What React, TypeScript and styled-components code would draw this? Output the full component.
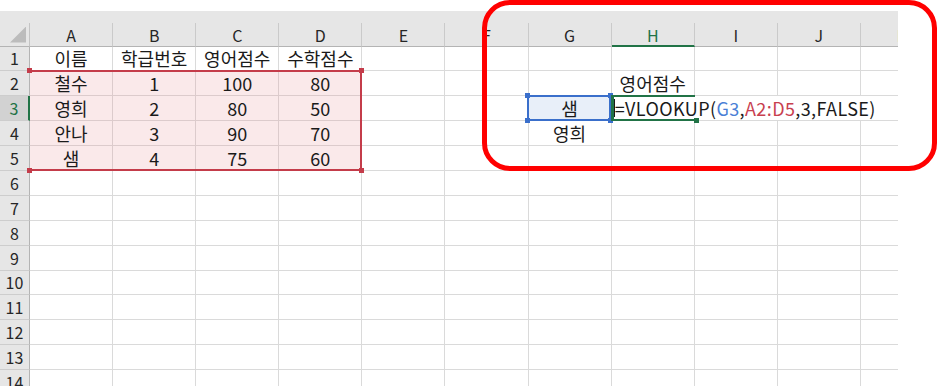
import styled, { createGlobalStyle } from "styled-components";

const ROW_HEAD_W = 30;
const COL_W = 83.1;
const ROW_H = 24.9;
const STRIP_H = 12;
const HEAD_H = 23.5;
const GRID_TOP = STRIP_H + HEAD_H;

const GREEN = "#217346";
const RANGE_RED = "#c43c4a";
const SEL_BLUE = "#3a6fcb";
const FONT = `"Noto Sans CJK KR", "Noto Sans", sans-serif`;

const COLS = ["A", "B", "C", "D", "E", "F", "G", "H", "I", "J", "K"];
const ROWS = Array.from({ length: 14 }, (_, i) => i + 1);

const DATA: Record<string, string> = {
    A1: "이름", B1: "학급번호", C1: "영어점수", D1: "수학점수",
    A2: "철수", B2: "1", C2: "100", D2: "80",
    A3: "영희", B3: "2", C3: "80", D3: "50",
    A4: "안나", B4: "3", C4: "90", D4: "70",
    A5: "샘", B5: "4", C5: "75", D5: "60",
    H2: "영어점수",
    G3: "샘",
    G4: "영희",
};

const colLeft = (c: number) => ROW_HEAD_W + c * COL_W;
const rowTop = (r: number) => GRID_TOP + (r - 1) * ROW_H;

type Tint = "pink" | "blue" | undefined;

const tintFor = (col: number, row: number): Tint => {
    if (col <= 3 && row >= 2 && row <= 5) return "pink";
    if (col === 6 && row === 3) return "blue";
    return undefined;
};

const GlobalStyle = createGlobalStyle`
    body {
        margin: 0;
        background: #ffffff;
        font-family: ${FONT};
    }
`;

const Page = styled.div`
    position: relative;
    width: 938px;
    height: 386px;
    padding-top: 11px;
    box-sizing: border-box;
    overflow: hidden;
`;

const Sheet = styled.div`
    position: relative;
    width: 898px;
    height: 375px;
    overflow: hidden;
    background: #ffffff;
`;

const TopStrip = styled.div`
    height: ${STRIP_H}px;
    background: #e6e6e6;
`;

const HeaderRow = styled.div`
    display: flex;
    height: ${HEAD_H}px;
    background: #e6e6e6;
`;

const Corner = styled.div`
    position: relative;
    flex: 0 0 ${ROW_HEAD_W}px;
    box-sizing: border-box;
    border-right: 1px solid #c4c4c4;
    border-bottom: 1px solid #b4b4b4;

    &::after {
        content: "";
        position: absolute;
        right: 3px;
        bottom: 3px;
        width: 16px;
        height: 16px;
        background: #bcbcbc;
        clip-path: polygon(100% 0, 100% 100%, 0 100%);
    }
`;

const ColHead = styled.div<{ $active?: boolean }>`
    flex: 0 0 ${COL_W}px;
    box-sizing: border-box;
    display: flex;
    align-items: center;
    justify-content: center;
    padding-top: 2px;
    font-size: 16px;
    color: ${(p) => (p.$active ? GREEN : "#262626")};
    border-right: 1px solid #cacaca;
    border-bottom: ${(p) => (p.$active ? `2px solid ${GREEN}` : "1px solid #b4b4b4")};
`;

const Row = styled.div`
    display: flex;
    height: ${ROW_H}px;
`;

const RowHead = styled.div<{ $active?: boolean }>`
    flex: 0 0 ${ROW_HEAD_W}px;
    box-sizing: border-box;
    display: flex;
    align-items: center;
    justify-content: center;
    font-size: 16px;
    color: ${(p) => (p.$active ? GREEN : "#262626")};
    background: ${(p) => (p.$active ? "#d2d2d2" : "#e6e6e6")};
    border-bottom: 1px solid #cdcdcd;
    border-right: ${(p) => (p.$active ? `2px solid ${GREEN}` : "1px solid #b4b4b4")};
`;

const Cell = styled.div<{ $tint?: Tint }>`
    flex: 0 0 ${COL_W}px;
    box-sizing: border-box;
    display: flex;
    align-items: center;
    justify-content: center;
    font-size: 18px;
    color: #1a1a1a;
    white-space: nowrap;
    background: ${(p) =>
        p.$tint === "pink" ? "#fae9ea" : p.$tint === "blue" ? "#e8eff9" : "#ffffff"};
    border-right: 1px solid ${(p) => (p.$tint === "pink" ? "#dccbcc" : "#dadada")};
    border-bottom: 1px solid ${(p) => (p.$tint === "pink" ? "#dccbcc" : "#dadada")};
`;

const Frame = styled.div<{ $color: string; $open?: boolean }>`
    position: absolute;
    box-sizing: border-box;
    border: 2px solid ${(p) => p.$color};
    ${(p) => (p.$open ? "border-left-color: transparent;" : "")}
    pointer-events: none;
`;

const Handle = styled.span<{ $color: string; $v: "top" | "bottom"; $h: "left" | "right"; $size?: number }>`
    position: absolute;
    width: ${(p) => p.$size ?? 5}px;
    height: ${(p) => p.$size ?? 5}px;
    background: ${(p) => p.$color};
    ${(p) => p.$v}: -${(p) => Math.ceil(((p.$size ?? 5) + 2) / 2)}px;
    ${(p) => p.$h}: -${(p) => Math.ceil(((p.$size ?? 5) + 2) / 2)}px;
`;

const EditOverflow = styled.div`
    position: absolute;
    box-sizing: border-box;
    background: #ffffff;
    display: flex;
    align-items: center;
    padding-left: 3px;
    font-size: 18px;
    letter-spacing: 0.4px;
    color: #1a1a1a;
    white-space: nowrap;
`;

const EditBox = styled.div`
    position: absolute;
    box-sizing: border-box;
    border-top: 2px solid ${GREEN};
    border-bottom: 2px solid ${GREEN};
    border-left: 3px solid ${GREEN};
`;

const Caret = styled.span`
    display: inline-block;
    width: 1px;
    height: 18px;
    background: #1a1a1a;
`;

const Ref = styled.span<{ $color: string }>`
    color: ${(p) => p.$color};
`;

const Annotation = styled.div`
    position: absolute;
    left: 482px;
    top: 0px;
    width: 455px;
    height: 171px;
    box-sizing: border-box;
    border: 5px solid #ff0000;
    border-radius: 28px;
    pointer-events: none;
`;

function App() {
    const rangeLeft = colLeft(0) - 1;
    const rangeTop = rowTop(2) - 1;
    const rangeW = colLeft(4) - rangeLeft;
    const rangeH = rowTop(6) - rangeTop;

    const gLeft = colLeft(6) - 2;
    const rTop = rowTop(3) - 1.5;
    const hLeft = colLeft(7) - 1;

    return (
        <>
            <GlobalStyle />
            <Page>
                <Sheet>
                    <TopStrip />
                    <HeaderRow>
                        <Corner />
                        {COLS.map((c) => (
                            <ColHead key={c} $active={c === "H"}>{c}</ColHead>
                        ))}
                    </HeaderRow>
                    {ROWS.map((r) => (
                        <Row key={r}>
                            <RowHead $active={r === 3}>{r}</RowHead>
                            {COLS.map((c, i) => (
                                <Cell key={c} $tint={tintFor(i, r)}>{DATA[c + r]}</Cell>
                            ))}
                        </Row>
                    ))}

                    <Frame
                        $color={RANGE_RED}
                        $open
                        style={{ left: rangeLeft, top: rangeTop, width: rangeW, height: rangeH }}
                    >
                        <Handle $color={RANGE_RED} $v="top" $h="left" />
                        <Handle $color={RANGE_RED} $v="top" $h="right" />
                        <Handle $color={RANGE_RED} $v="bottom" $h="left" />
                        <Handle $color={RANGE_RED} $v="bottom" $h="right" />
                    </Frame>

                    <Frame
                        $color={SEL_BLUE}
                        style={{ left: gLeft, top: rTop, width: COL_W + 1, height: ROW_H + 1 }}
                    >
                        <Handle $color={SEL_BLUE} $v="top" $h="left" />
                        <Handle $color={SEL_BLUE} $v="top" $h="right" />
                        <Handle $color={SEL_BLUE} $v="bottom" $h="left" />
                        <Handle $color={SEL_BLUE} $v="bottom" $h="right" />
                    </Frame>

                    <EditOverflow style={{ left: hLeft, top: rTop + 1, width: 898 - hLeft, height: ROW_H - 1 }}>
                        <Caret />
                        =VLOOKUP(<Ref $color="#4a7fd6">G3</Ref>,<Ref $color="#c8404f">A2:D5</Ref>,3,FALSE)
                    </EditOverflow>
                    <EditBox style={{ left: hLeft, top: rTop, width: COL_W + 1, height: ROW_H + 1 }}>
                        <Handle $color={GREEN} $v="bottom" $h="right" />
                    </EditBox>
                </Sheet>
                <Annotation />
            </Page>
        </>
    );
}

export default App;
